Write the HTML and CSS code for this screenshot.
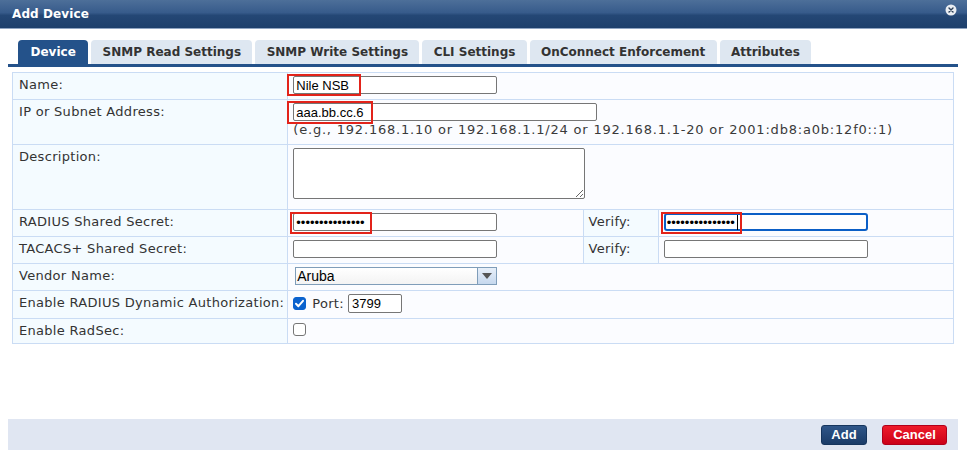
FILE: index.html
```html
<!DOCTYPE html>
<html>
<head>
<meta charset="utf-8">
<link rel="stylesheet" href="styles.css">
</head>
<body>
<div class="dialog">
  <header class="titlebar">
    <span class="title">Add Device</span>
    <svg class="close" width="12" height="12" viewBox="0 0 12 12"><circle cx="6" cy="6" r="5.5" fill="#e9edf2"/><path d="M4 4 L8 8 M8 4 L4 8" stroke="#2b3e57" stroke-width="1.4" stroke-linecap="round"/></svg>
  </header>
  <div class="content">
    <ul class="tabs">
      <li class="tab active">Device</li>
      <li class="tab">SNMP Read Settings</li>
      <li class="tab">SNMP Write Settings</li>
      <li class="tab">CLI Settings</li>
      <li class="tab">OnConnect Enforcement</li>
      <li class="tab">Attributes</li>
    </ul>
    <div class="tabline"></div>
    <table class="form">
      <colgroup><col class="c1"><col class="c2"><col class="c3"><col class="c4"></colgroup>
      <tr>
        <td class="label">Name:</td>
        <td class="value" colspan="3"><span class="field w204"><input class="text" type="text" value="Nile NSB"><span class="mark mark-name"></span></span></td>
      </tr>
      <tr>
        <td class="label">IP or Subnet Address:</td>
        <td class="value ip" colspan="3"><span class="field w304"><input class="text" type="text" value="aaa.bb.cc.6"><span class="mark mark-ip"></span></span><div class="hint">(e.g., 192.168.1.10 or 192.168.1.1/24 or 192.168.1.1-20 or 2001:db8:a0b:12f0::1)</div></td>
      </tr>
      <tr>
        <td class="label">Description:</td>
        <td class="value desc" colspan="3"><textarea class="area"></textarea></td>
      </tr>
      <tr>
        <td class="label">RADIUS Shared Secret:</td>
        <td class="value"><span class="field w204"><input class="text" type="password" value="aaaaaaaaaaaaaaa"><span class="mark mark-secret"></span></span></td>
        <td class="label vlabel">Verify:</td>
        <td class="value"><span class="field w204"><input class="text focus" type="password" value="aaaaaaaaaaaaaaa"><span class="mark mark-verify"></span><span class="caret"></span></span></td>
      </tr>
      <tr>
        <td class="label">TACACS+ Shared Secret:</td>
        <td class="value"><span class="field w204"><input class="text" type="password" value=""></span></td>
        <td class="label vlabel">Verify:</td>
        <td class="value"><span class="field w204"><input class="text" type="password" value=""></span></td>
      </tr>
      <tr>
        <td class="label">Vendor Name:</td>
        <td class="value" colspan="3"><div class="select"><span class="sel-text">Aruba</span><span class="sel-btn"><svg width="10" height="6" viewBox="0 0 10 6"><path d="M0 0 H10 L5 6 Z" fill="#555"/></svg></span></div></td>
      </tr>
      <tr>
        <td class="label">Enable RADIUS Dynamic Authorization:</td>
        <td class="value" colspan="3"><div class="inline"><span class="check on"><svg width="13" height="13" viewBox="0 0 13 13"><path d="M3 6.8 L5.4 9.2 L10 3.8" fill="none" stroke="#fff" stroke-width="2" stroke-linecap="round" stroke-linejoin="round"/></svg></span><span class="port-label">Port:</span><input class="text port" type="text" value="3799"></div></td>
      </tr>
      <tr>
        <td class="label">Enable RadSec:</td>
        <td class="value last" colspan="3"><span class="check"></span></td>
      </tr>
    </table>
  </div>
  <footer class="actions">
    <button class="btn add">Add</button>
    <button class="btn cancel">Cancel</button>
  </footer>
</div>
</body>
</html>
```
FILE: styles.css
```css
html, body {
  margin: 0;
  padding: 0;
  background: #ffffff;
}
body {
  font-family: "DejaVu Sans", Verdana, sans-serif;
  font-size: 13px;
  color: #333333;
}
.dialog {
  width: 967px;
  height: 458px;
  display: flex;
  flex-direction: column;
}
.titlebar {
  height: 28px;
  border-bottom: 1px solid #8fa4c2;
  background: linear-gradient(to bottom, #4d6f99 0%, #375b8b 45%, #244775 55%, #1d3f6c 100%);
  display: flex;
  align-items: center;
  justify-content: space-between;
  padding: 0 10px 0 12px;
}
.title {
  color: #ffffff;
  font-weight: bold;
  font-size: 12px;
  letter-spacing: 0.1px;
}
.close {
  display: block;
  margin-top: -8px;
}
.content {
  padding: 11px 9px 0 8px;
}
.tabs {
  list-style: none;
  margin: 0;
  padding: 0 0 0 10px;
  display: flex;
  gap: 3px;
}
.tab {
  height: 24px;
  line-height: 25px;
  padding: 0 11.3px;
  background: #dee7f1;
  color: #333333;
  font-weight: bold;
  font-size: 12px;
  border-radius: 4px 4px 0 0;
}
.tab.active {
  background: #24528a;
  color: #ffffff;
  padding: 0 12.5px;
}
.tabline {
  height: 3px;
  background: #24528a;
}
.form {
  margin: 5px 0 0 4px;
  width: 942px;
  table-layout: fixed;
  border-collapse: collapse;
}
.c1 { width: 275px; }
.c2 { width: 295px; }
.c3 { width: 75px; }
.c4 { width: 295px; }
.form td {
  border: 1px solid #cadcf4;
  vertical-align: top;
  padding: 3px 5px 5px 5px;
  line-height: 16px;
}
.form td.label {
  background: #f4fbff;
  padding: 4px 6px 4px 6px;
  white-space: nowrap;
  color: #333333;
  letter-spacing: 0.3px;
}
.form td.vlabel {
  padding-left: 5px;
  letter-spacing: 0.25px;
}
.form td.value {
  background: #fbfcff;
  height: 18px;
}
.form td.ip {
  padding-bottom: 5px;
}
.form td.desc {
  padding-bottom: 10px;
}
.form td.last {
  padding-bottom: 3px;
}
.field {
  position: relative;
  display: block;
  height: 18px;
}
.w204 { width: 204px; }
.w304 { width: 304px; }
.text {
  box-sizing: border-box;
  display: block;
  width: 100%;
  height: 18px;
  margin: 0;
  padding: 0 2px;
  border: 1px solid #767676;
  border-radius: 2px;
  background: #ffffff;
  font-family: "Liberation Sans", Arial, sans-serif;
  font-size: 13px;
  color: #000000;
  outline: none;
}
.text.focus {
  border: 2px solid #0b5fc6;
  border-radius: 3px;
  padding: 0 1px;
}
.mark {
  position: absolute;
  box-sizing: border-box;
  border: 2px solid #e2231a;
}
.mark-name { left: -6px; top: -2px; width: 74px; height: 22px; }
.mark-ip { left: -6px; top: -2px; width: 86px; height: 23px; }
.mark-secret { left: -3px; top: -1px; width: 82px; height: 22px; }
.mark-verify { left: -3px; top: -1px; width: 81px; height: 22px; }
.caret {
  position: absolute;
  left: 73px;
  top: 2px;
  width: 1px;
  height: 15px;
  background: #000000;
}
.hint {
  line-height: 18px;
  white-space: nowrap;
  color: #3a3a3a;
  letter-spacing: 0.8px;
}
.area {
  box-sizing: border-box;
  display: block;
  width: 292px;
  height: 51px;
  margin: 0;
  border: 1px solid #767676;
  border-radius: 2px;
  background: #ffffff;
}
.select {
  box-sizing: border-box;
  margin-left: 2px;
  width: 202px;
  height: 18px;
  border: 1px solid #7f9db9;
  background: linear-gradient(to bottom, #ffffff, #f3f3f3);
  display: flex;
  align-items: center;
  justify-content: space-between;
}
.sel-text {
  font-family: "Liberation Sans", Arial, sans-serif;
  font-size: 14px;
  color: #000000;
  padding-left: 1px;
  line-height: 16px;
}
.sel-btn {
  width: 18px;
  height: 16px;
  border-left: 1px solid #7f9db9;
  background: linear-gradient(to bottom, #e7eff9, #c6d8ee);
  display: flex;
  align-items: center;
  justify-content: center;
}
.inline {
  display: flex;
  align-items: center;
  height: 19px;
}
.check {
  box-sizing: border-box;
  display: block;
  width: 13px;
  height: 13px;
  border: 1px solid #767676;
  border-radius: 3px;
  background: #ffffff;
  margin-top: 1px;
}
.inline .check {
  margin-top: 0;
}
.check.on {
  background: #0b63ce;
  border-color: #0b63ce;
}
.check.on svg {
  display: block;
  margin: -1px;
}
.port-label {
  margin-left: 6px;
  margin-right: 4px;
  letter-spacing: 0.3px;
}
.text.port {
  width: 54px;
  height: 19px;
  padding: 0 3px;
}
.actions {
  margin: auto 9px 8px 8px;
  height: 31px;
  background: #e0e6f2;
  display: flex;
  align-items: center;
  justify-content: flex-end;
  gap: 15px;
  padding-right: 11px;
}
.btn {
  box-sizing: border-box;
  height: 20px;
  padding: 0;
  border-radius: 3px;
  font-family: "Liberation Sans", Arial, sans-serif;
  font-weight: bold;
  font-size: 13px;
  color: #ffffff;
  cursor: pointer;
}
.btn.add {
  width: 46px;
  border: 1px solid #16355d;
  background: linear-gradient(to bottom, #2f5689, #1b3c68);
}
.btn.cancel {
  width: 65px;
  border: 1px solid #b0001a;
  background: linear-gradient(to bottom, #ee1b2a, #cc0018);
}
```
